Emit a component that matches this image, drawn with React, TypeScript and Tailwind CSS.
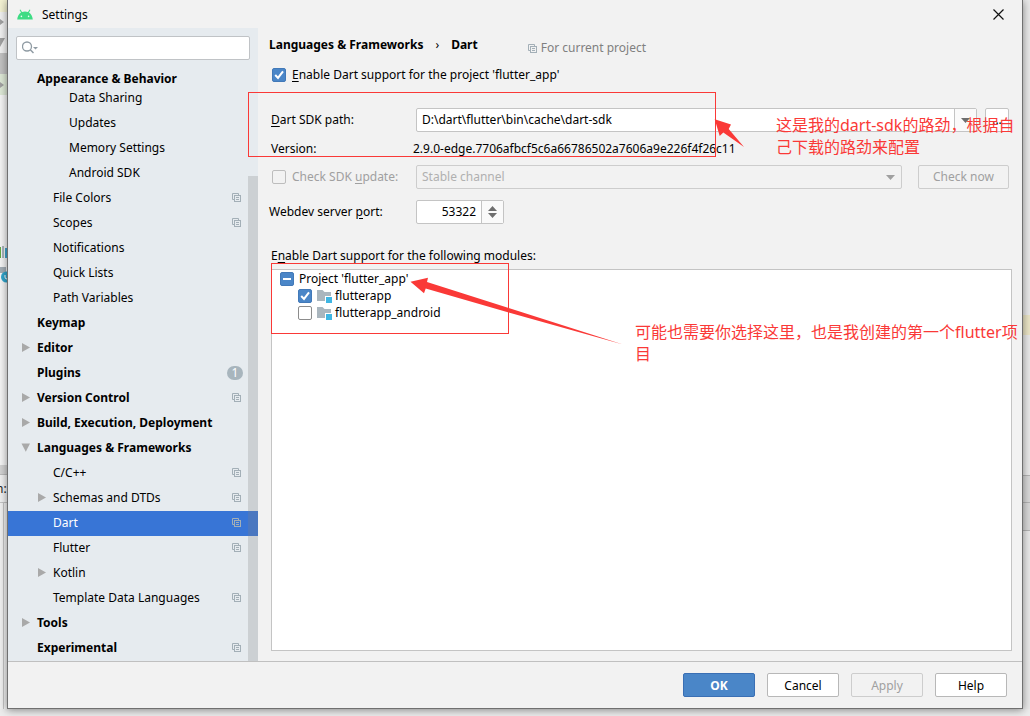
import React, { useState } from 'react';
import clsx from 'clsx';

type TreeItem = {
    label: string;
    level: 0 | 1 | 2;
    arrow?: 'open' | 'closed';
    projectLevel?: boolean;
    badge?: string;
};

const treeItems: TreeItem[] = [
    { label: 'Data Sharing', level: 2 },
    { label: 'Updates', level: 2 },
    { label: 'Memory Settings', level: 2 },
    { label: 'Android SDK', level: 2 },
    { label: 'File Colors', level: 1, projectLevel: true },
    { label: 'Scopes', level: 1, projectLevel: true },
    { label: 'Notifications', level: 1 },
    { label: 'Quick Lists', level: 1 },
    { label: 'Path Variables', level: 1 },
    { label: 'Keymap', level: 0 },
    { label: 'Editor', level: 0, arrow: 'closed' },
    { label: 'Plugins', level: 0, badge: '1' },
    { label: 'Version Control', level: 0, arrow: 'closed', projectLevel: true },
    { label: 'Build, Execution, Deployment', level: 0, arrow: 'closed' },
    { label: 'Languages & Frameworks', level: 0, arrow: 'open' },
    { label: 'C/C++', level: 1, projectLevel: true },
    { label: 'Schemas and DTDs', level: 1, arrow: 'closed', projectLevel: true },
    { label: 'Dart', level: 1, projectLevel: true },
    { label: 'Flutter', level: 1, projectLevel: true },
    { label: 'Kotlin', level: 1, arrow: 'closed' },
    { label: 'Template Data Languages', level: 1, projectLevel: true },
    { label: 'Tools', level: 0, arrow: 'closed' },
    { label: 'Experimental', level: 0, projectLevel: true },
];

const AndroidIcon = () => (
    <svg className="w-4 h-[11px]" viewBox="0 0 16 11">
        <path d="M0.2 10.6C0.4 7.300 1.800 5 4 3.400L2.600 1L3.400 0.500L5 3C6.900 2.200 9.100 2.200 11 3L12.600 0.500L13.400 1L12 3.400C14.200 5 15.600 7.300 15.800 10.600Z" fill="#3ddc84" />
        <circle cx="4.400" cy="7.400" r="0.800" fill="#e8fff2" />
        <circle cx="11.600" cy="7.400" r="0.800" fill="#e8fff2" />
    </svg>
);

const CopyIcon = () => (
    <svg className="w-[9px] h-[9px] shrink-0" viewBox="0 0 9 9" fill="none" stroke="#a3afb7">
        <path d="M2 6.5H0.5V0.5H6.5V2" />
        <rect x="2.5" y="2.5" width="6" height="6" />
        <path d="M4 4.5h3M4 6.5h3" />
    </svg>
);

const TreeArrow: React.FC<{ state?: 'open' | 'closed' }> = ({ state }) => (
    <svg className="w-[9px] h-[9px] shrink-0" viewBox="0 0 9 9" fill="#a9a9a9">
        {state === 'closed' && <path d="M1 0L9 4.500L1 9Z" />}
        {state === 'open' && <path d="M0.500 0.500H9L4.800 8.800Z" />}
    </svg>
);

const DownArrow: React.FC<{ className?: string }> = ({ className }) => (
    <svg className={clsx('w-[9px] h-[5px] pointer-events-none', className)} viewBox="0 0 9 5" fill="currentColor">
        <path d="M0 0H9L4.500 5Z" />
    </svg>
);

const FolderIcon = () => (
    <svg className="w-4 h-[14px] shrink-0" viewBox="0 0 16 14">
        <path d="M0 1H5.500L7.500 3H14V7H8V12H0Z" fill="#aab6be" />
        <rect x="9" y="8" width="6" height="6" fill="#3fb6e3" />
    </svg>
);

const Checkbox: React.FC<{
    id: string;
    state?: 'checked' | 'mixed' | 'empty';
    disabled?: boolean;
}> = ({ id, state = 'empty', disabled }) => {
    const [value, setValue] = useState(state);
    const filled = value !== 'empty';

    return (
        <span className="grid w-[14px] h-[14px] shrink-0">
            <input
                id={id}
                type="checkbox"
                checked={filled}
                disabled={disabled}
                onChange={() => setValue(filled ? 'empty' : 'checked')}
                className={clsx(
                    'appearance-none col-start-1 row-start-1 w-[14px] h-[14px] rounded-xs border',
                    filled ? 'bg-[#4a86c8] border-[#4279b8]' : disabled ? 'bg-[#f2f2f2] border-[#bdbdbd]' : 'bg-white border-[#8c8c8c]'
                )}
            />
            {filled && (
                <svg className="col-start-1 row-start-1 w-[14px] h-[14px] pointer-events-none" viewBox="0 0 14 14" fill="none" stroke="#fff" strokeWidth="2">
                    {value === 'mixed' ? <path d="M3 7h8" /> : <path d="M3.200 7L6 9.900L11 3.300" />}
                </svg>
            )}
        </span>
    );
};

const Sidebar = () => {
    const [selected, setSelected] = useState('Dart');

    return (
        <nav className="relative w-[250px] shrink-0 bg-[#e6ebef]">
            <div className="mx-2 mt-2 flex h-6 items-center rounded-xs border border-[#c0c3c6] bg-white px-[5px]">
                <svg className="w-4 h-4 shrink-0" viewBox="0 0 16 16" fill="none" stroke="#8f9ba3">
                    <circle cx="5" cy="6.500" r="4.500" strokeWidth="1.300" />
                    <path d="M8.300 9.800L11.500 13" strokeWidth="1.500" />
                    <path d="M11 7H16L13.500 9.500Z" fill="#8f9ba3" stroke="none" />
                </svg>
                <input aria-label="Search settings" className="min-w-0 flex-1 px-1 outline-none" />
            </div>
            <h2 className="mt-[11px] flex h-[15px] items-center pl-[29px] font-bold">Appearance &amp; Behavior</h2>
            <ul>
                {treeItems.map(item => (
                    <li key={item.label}>
                        <button
                            onClick={() => setSelected(item.label)}
                            className={clsx(
                                'flex h-[25px] w-full items-center gap-[7px] pr-[17px] pb-[2px] text-left',
                                item.level === 0 && 'pl-[13px] font-bold',
                                item.level === 1 && 'pl-[29px]',
                                item.level === 2 && 'pl-[45px]',
                                selected === item.label && 'bg-[#3875d6] text-white'
                            )}
                        >
                            <TreeArrow state={item.arrow} />
                            <span className="flex-1 whitespace-nowrap">{item.label}</span>
                            {item.projectLevel && <CopyIcon />}
                            {item.badge && (
                                <span className="-mr-[2px] flex h-[14px] w-4 items-center justify-center rounded-full bg-[#a8b5bd] font-normal text-white">
                                    {item.badge}
                                </span>
                            )}
                        </button>
                    </li>
                ))}
            </ul>
            <div className="absolute top-[148px] right-0 bottom-0 w-[10px] bg-[#80808040]" />
        </nav>
    );
};

const fieldClass = 'h-6 rounded-xs border border-[#c4c4c4] bg-white';

const DartSettings = () => (
    <main className="flex min-w-0 flex-1 flex-col pt-[5px] pr-[10px] pb-[10px] pl-[11px]">
        <div className="flex h-6 items-center">
            <h1 className="flex gap-3 font-bold">
                <span>Languages &amp; Frameworks</span>
                <span className="font-normal">›</span>
                <span>Dart</span>
            </h1>
            <span className="mt-[6px] ml-[50px] flex items-center gap-1 text-[#808080]">
                <CopyIcon />
                For current project
            </span>
        </div>

        <div className="mt-2 flex h-5 items-center gap-[6px] pl-[3px]">
            <Checkbox id="enable-dart" state="checked" />
            <label htmlFor="enable-dart"><u className="underline-offset-2">E</u>nable Dart support for the project 'flutter_app'</label>
        </div>

        <div className="mt-[23px] flex h-6 items-center pr-[3px] pl-[2px]">
            <label htmlFor="sdk-path" className="w-[145px] shrink-0"><u className="underline-offset-2">D</u>art SDK path:</label>
            <div className={clsx(fieldClass, 'flex min-w-0 flex-1')}>
                <input id="sdk-path" defaultValue="D:\dart\flutter\bin\cache\dart-sdk" className="min-w-0 flex-1 px-[5px] outline-none" />
                <button aria-label="Recent SDK paths" className="flex w-[22px] items-center justify-center border-l border-[#c4c4c4] bg-[#fafafa] text-[#6e6e6e]">
                    <DownArrow />
                </button>
            </div>
            <button aria-label="Browse" className={clsx(fieldClass, 'ml-2 flex w-6 items-center justify-center')}>
                ...
            </button>
        </div>

        <div className="mt-[7px] flex h-5 items-center pl-[2px]">
            <span className="w-[142px] shrink-0">Version:</span>
            <span>2.9.0-edge.7706afbcf5c6a66786502a7606a9e226f4f26c11</span>
        </div>

        <div className="mt-[6px] flex h-6 items-center pr-[3px] pl-[3px] text-[#a0a0a0]">
            <div className="flex w-[144px] shrink-0 items-center gap-[6px]">
                <Checkbox id="check-update" disabled />
                <label htmlFor="check-update">Check SDK <u className="underline-offset-2">u</u>pdate:</label>
            </div>
            <div className="grid min-w-0 flex-1 items-center">
                <select aria-label="Update channel" disabled className="col-start-1 row-start-1 h-6 appearance-none rounded-xs border border-[#cdcdcd] px-[5px] text-[#b0b0b0]">
                    <option>Stable channel</option>
                </select>
                <DownArrow className="col-start-1 row-start-1 mr-[7px] justify-self-end" />
            </div>
            <button disabled className="ml-4 h-6 w-[91px] rounded-xs border border-[#cdcdcd]">Check now</button>
        </div>

        <div className="mt-[11px] flex h-6 items-center">
            <label htmlFor="port" className="w-[147px] shrink-0">Webdev server <u className="underline-offset-2">p</u>ort:</label>
            <div className={clsx(fieldClass, 'flex w-[88px]')}>
                <input id="port" defaultValue="53322" className="min-w-0 flex-1 px-[5px] text-right outline-none" />
                <div className="flex w-[22px] flex-col items-center justify-center gap-[2px] border-l border-[#c4c4c4] bg-[#fafafa] text-[#6e6e6e]">
                    <button aria-label="Increase port"><DownArrow className="rotate-180" /></button>
                    <button aria-label="Decrease port"><DownArrow /></button>
                </div>
            </div>
        </div>

        <h2 className="mt-[22px] flex h-5 items-center pl-[2px]">
            <span>E<u className="underline-offset-2">n</u>able Dart support for the following modules:</span>
        </h2>
        <div className="mt-[3px] ml-[2px] flex-1 border border-[#c4c4c4] bg-white pl-2">
            <div className="flex h-[17px] items-center gap-[5px]">
                <Checkbox id="module-project" state="mixed" />
                <label htmlFor="module-project">Project 'flutter_app'</label>
            </div>
            <div className="flex h-[17px] items-center gap-[5px] pl-[18px]">
                <Checkbox id="module-flutterapp" state="checked" />
                <label htmlFor="module-flutterapp" className="flex items-center gap-[2px]"><FolderIcon />flutterapp</label>
            </div>
            <div className="flex h-[17px] items-center gap-[5px] pl-[18px]">
                <Checkbox id="module-android" />
                <label htmlFor="module-android" className="flex items-center gap-[2px]"><FolderIcon />flutterapp_android</label>
            </div>
        </div>
    </main>
);

const footerButtonClass = 'h-6 w-[72px] rounded-xs border pt-[2px]';

const Footer = () => (
    <footer className="flex justify-end gap-3 border-t border-[#c0c0c0] py-[11px] pr-[15px]">
        <button className={clsx(footerButtonClass, 'border-[#3a6fb4] bg-[#4a86c8] font-bold text-white')}>OK</button>
        <button className={clsx(footerButtonClass, 'border-[#b8b8b8] bg-white')}>Cancel</button>
        <button disabled className={clsx(footerButtonClass, 'border-[#cdcdcd] text-[#a0a0a0]')}>Apply</button>
        <button className={clsx(footerButtonClass, 'border-[#b8b8b8] bg-white')}>Help</button>
    </footer>
);

// Slices of the editor window that stay visible around the dialog
const LeftEdge = () => (
    <div className="flex flex-col overflow-hidden bg-[#f0f0f0] text-[#9a9a9a]">
        <div className="h-3 bg-[#f3f1d2]" />
        <svg className="h-[41px] w-[7px] shrink-0" viewBox="0 0 7 41" fill="#a0a0a0">
            <path d="M0 7L4 10L0 13ZM0 26H5L0 35Z" />
        </svg>
        <div className="h-[21px] bg-[#c2c2c2]" />
        <div className="flex h-[21px] items-center bg-[#dde8d6]">
            <svg className="h-[6px] w-1" viewBox="0 0 4 6" fill="#a0a0a0"><path d="M0 0L4 3L0 6Z" /></svg>
        </div>
        <svg className="h-[370px] w-[7px] shrink-0 bg-[#f4f4f4]" viewBox="0 0 7 370">
            <path d="M0 152h1v11H0Z" fill="#62a844" />
            <path d="M2 151h2v12H2Z" fill="#a9b4bc" />
            <path d="M5 153h2v10H5Z" fill="#3fa5cd" />
            <path d="M0 172h6v6H0Z" fill="#a3adb5" />
            <circle cx="6.500" cy="182" r="5.500" fill="#30a5cc" />
            <path d="M5 180v2q0 2 2 2" fill="none" stroke="#fff" />
        </svg>
        <div className="h-[10px] border-b border-[#bbbbbb] bg-[#d2d2d2]" />
        <div className="h-[28px] border-b border-[#c4c4c4] leading-[28px] text-[#202020]">
            <span className="-ml-1">n:</span>
        </div>
        <div className="ml-[3px] flex-1 border-l border-[#c4c4c4]" />
    </div>
);

const RightEdge = () => (
    <div className="flex flex-col bg-[#e9e9e9]">
        <div className="h-[315px]" />
        <div className="h-5 bg-[#ebe5c6]" />
        <div className="h-[140px]" />
        <div className="h-[27px] border-t border-[#b4b4b4] bg-[#d8d8d8]" />
        <div className="h-[29px] border-y border-[#b4b4b4] bg-[#d8d8d8]" />
    </div>
);

const Annotations = () => (
    <div className="pointer-events-none absolute inset-0 z-20 text-base leading-[22px] whitespace-nowrap text-[#fa3937]">
        <div className="absolute top-[92px] left-[248px] h-[65px] w-[468px] border border-[#fa3937]" />
        <div className="absolute top-[263px] left-[271px] h-[71px] w-[238px] border border-[#fa3937]" />
        <svg className="absolute top-[118px] left-[714px] h-[30px] w-[31px]" viewBox="714 118 31 30" fill="#fa3937">
            <path d="M714.700 119.200L731 124.500L728.700 129L744 147L723.300 132.500L719.700 136Z" />
        </svg>
        <svg className="absolute top-[277px] left-[410px] h-[68px] w-[214px]" viewBox="410 277 214 68" fill="#fa3937">
            <path d="M410.500 281.700L428 277.800L427 282L508.700 308L623 344.500L508.700 312.500L425.700 288.500L424 293.200Z" />
        </svg>
        <p className="absolute top-[114px] left-[776px]">这是我的dart-sdk的路劲，根据自<br />己下载的路劲来配置</p>
        <p className="absolute top-[321px] left-[635px]">可能也需要你选择这里，也是我创建的第一个flutter项<br />目</p>
    </div>
);

const App = () => (
    <div className="relative grid min-h-screen grid-cols-[7px_minmax(0,1fr)_7px] grid-rows-[1fr_7px] overflow-hidden bg-[#ececec] font-['Noto_Sans','Noto_Sans_CJK_SC',sans-serif] text-[12px] leading-4 text-black">
        <LeftEdge />
        <div className="z-10 flex flex-col border-x border-b border-[#707070] bg-[#f2f2f2] shadow-[0_1px_8px_rgba(0,0,0,0.45)]">
            <header className="flex h-7 items-center gap-[9px] pt-px pr-[18px] pl-[9px]">
                <AndroidIcon />
                <span className="flex-1">Settings</span>
                <button aria-label="Close">
                    <svg className="h-[11px] w-[11px]" viewBox="0 0 11 11" fill="none" stroke="#111" strokeWidth="1.200">
                        <path d="M0.500 0.500L10.500 10.500M10.500 0.500L0.500 10.500" />
                    </svg>
                </button>
            </header>
            <div className="flex flex-1">
                <Sidebar />
                <DartSettings />
            </div>
            <Footer />
        </div>
        <RightEdge />
        <Annotations />
    </div>
);

export default App;
